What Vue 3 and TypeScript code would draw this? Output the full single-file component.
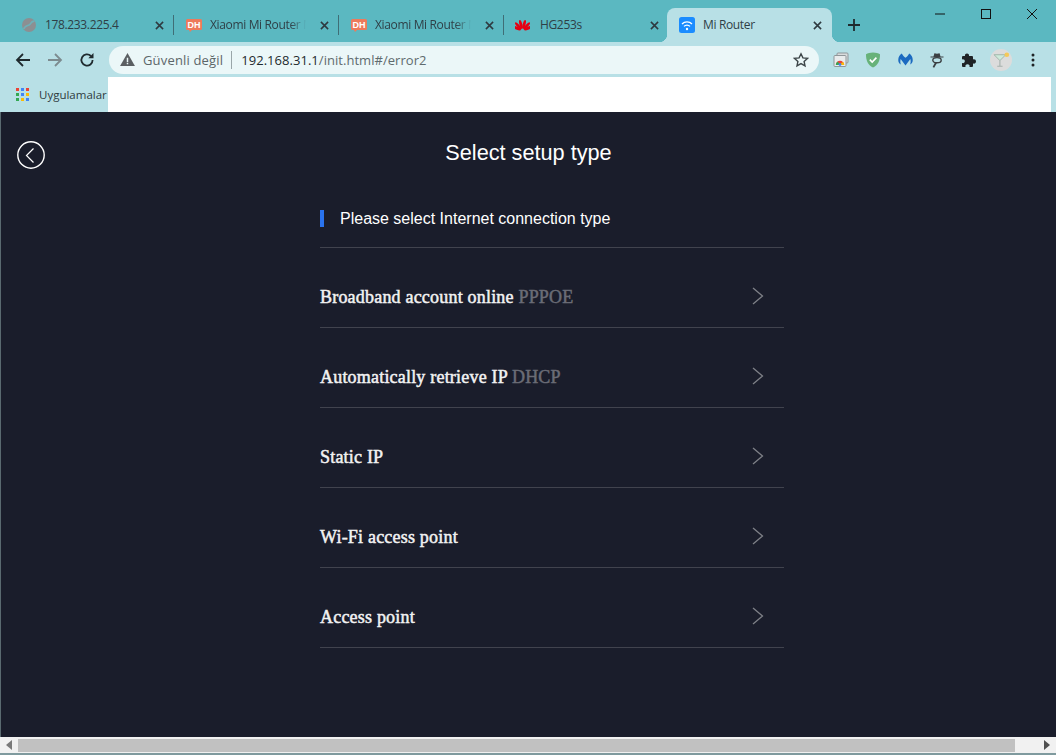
<script setup lang="ts">
type Tab = { title: string; icon: 'globe' | 'dh' | 'huawei' | 'wifi'; active?: boolean; faded?: boolean }
type Option = { label: string; tag?: string }

const tabs: Tab[] = [
  { title: '178.233.225.4', icon: 'globe' },
  { title: 'Xiaomi Mi Router M', icon: 'dh', faded: true },
  { title: 'Xiaomi Mi Router M', icon: 'dh', faded: true },
  { title: 'HG253s', icon: 'huawei' },
  { title: 'Mi Router', icon: 'wifi', active: true },
]

const options: Option[] = [
  { label: 'Broadband account online', tag: 'PPPOE' },
  { label: 'Automatically retrieve IP', tag: 'DHCP' },
  { label: 'Static IP' },
  { label: 'Wi-Fi access point' },
  { label: 'Access point' },
]

const appColors = ['#ea4335', '#4285f4', '#ea4335', '#34a853', '#4285f4', '#fbbc05', '#34a853', '#fbbc05', '#4285f4']
const petals = [-68, -42, -15, 15, 42, 68]
</script>

<template>
  <div class="window">
    <div class="tabstrip">
      <div v-for="(tab, i) in tabs" :key="i" class="tab" :class="{ active: tab.active, sep: i < 3 }">
        <svg v-if="tab.icon === 'globe'" class="favicon" viewBox="0 0 14 14">
          <circle cx="7" cy="7" r="7" fill="#8c8f92" />
          <path d="M12.500 3.200C8.500 3 9.500 6 7 7S2.500 8 1.800 11" fill="none" stroke="#6fb0b8" stroke-width="1.700" />
        </svg>
        <svg v-else-if="tab.icon === 'dh'" class="favicon-dh" viewBox="0 0 16 13">
          <path d="M1.500 0h13A1.500 1.500 0 0 1 16 1.500v8A1.500 1.500 0 0 1 14.500 11H6l-2 2-1-2H1.500A1.500 1.500 0 0 1 0 9.500v-8A1.500 1.500 0 0 1 1.500 0z" fill="#ee7a5b" />
          <text x="8" y="9" text-anchor="middle" class="dh-text">DH</text>
        </svg>
        <svg v-else-if="tab.icon === 'huawei'" class="favicon huawei" viewBox="0 0 15 12">
          <ellipse v-for="a in petals" :key="a" cx="7.500" cy="5.200" rx="1.400" ry="4.600" fill="#e60012" :transform="`rotate(${a} 7.500 11.500)`" />
        </svg>
        <svg v-else class="favicon wifi" viewBox="0 0 16 16">
          <rect width="16" height="16" rx="2.500" fill="#1a8cff" />
          <path d="M3 7a7 7 0 0 1 10 0M5 9.400a4 4 0 0 1 6 0" fill="none" stroke="#fff" stroke-width="1.300" />
          <circle cx="8" cy="12" r="1.200" fill="#fff" />
        </svg>
        <span class="tab-title" :class="{ faded: tab.faded }">{{ tab.title }}</span>
        <svg class="tab-close" viewBox="0 0 10 10">
          <path d="M1 1l8 8M9 1l-8 8" stroke="#2e3a40" stroke-width="1.700" fill="none" />
        </svg>
      </div>
      <svg class="new-tab" viewBox="0 0 14 14">
        <path d="M7 1v12M1 7h12" stroke="#1f2a2e" stroke-width="1.800" fill="none" />
      </svg>
      <div class="win-controls">
        <span class="win-btn"><svg viewBox="0 0 12 12"><path d="M1 6h10" stroke="#111" fill="none" /></svg></span>
        <span class="win-btn"><svg viewBox="0 0 12 12"><rect x="1.500" y="1.500" width="9" height="9" stroke="#111" fill="none" /></svg></span>
        <span class="win-btn"><svg viewBox="0 0 12 12"><path d="M1 1l10 10M11 1L1 11" stroke="#111" fill="none" /></svg></span>
      </div>
    </div>

    <div class="toolbar">
      <span class="tool">
        <svg viewBox="0 0 16 16"><path d="M15 8H2M8 2L2 8l6 6" fill="none" stroke="#1f2a2e" stroke-width="1.800" /></svg>
      </span>
      <span class="tool">
        <svg viewBox="0 0 16 16"><path d="M1 8h13M8 2l6 6-6 6" fill="none" stroke="#7c8b8f" stroke-width="1.800" /></svg>
      </span>
      <span class="tool">
        <svg viewBox="0 0 16 16">
          <path d="M13.600 8a5.600 5.600 0 1 1-1.700-4" fill="none" stroke="#1f2a2e" stroke-width="1.800" />
          <path d="M14.500 1v5.200H9.300z" fill="#1f2a2e" />
        </svg>
      </span>
      <div class="omnibox">
        <svg class="warn" viewBox="0 0 16 14">
          <path d="M8 0l8 14H0z" fill="#5a5f62" />
          <path d="M7.200 5h1.600v4.600H7.200zM7.200 10.600h1.600v1.600H7.200z" fill="#ebf7f8" />
        </svg>
        <span class="insecure">Güvenli değil</span>
        <span class="divider"></span>
        <span class="url"><b>192.168.31.1</b>/init.html#/error2</span>
        <svg class="star" viewBox="0 0 16 16">
          <path d="M8 1.800l1.900 4.100 4.500.5-3.300 3 .9 4.400L8 11.600l-4 2.200.9-4.400-3.300-3 4.500-.5z" fill="none" stroke="#3d4649" stroke-width="1.400" />
        </svg>
      </div>
      <div class="extensions">
        <span class="tool">
          <svg viewBox="0 0 16 16">
            <rect x="4" y="1" width="11" height="10" rx="1" fill="#d8dcdd" stroke="#8f9699" />
            <rect x="1" y="3.500" width="12" height="11" rx="1" fill="#e8ebec" stroke="#8f9699" />
            <path d="M2.800 13a4.200 4.200 0 0 1 8.400 0z" fill="#ea4335" />
            <path d="M2.800 13a4.200 4.200 0 0 1 2-3.500L7 13z" fill="#34a853" />
            <path d="M8 13h3.200a4.200 4.200 0 0 0-1.200-3l-2 1.300z" fill="#fbbc05" />
            <circle cx="7" cy="12.600" r="1.400" fill="#4285f4" />
          </svg>
        </span>
        <span class="tool">
          <svg viewBox="0 0 16 16">
            <path d="M8 .6c3 0 5.200.8 7 1.600 0 6-1.600 10.800-7 13.400C2.600 13 1 8.200 1 2.200 2.800 1.400 5 .6 8 .6z" fill="#67b279" />
            <path d="M4.800 7.600l2.400 2.400 4.200-4.400" fill="none" stroke="#fff" stroke-width="1.600" />
          </svg>
        </span>
        <span class="tool">
          <svg class="mb-logo" viewBox="0 0 16 14">
            <path d="M4 .5C2 1.500.2 4 .2 7.500c0 2.300 1 4 2.800 5-.7-2-.8-4-.2-6L8 13.500l5.200-7c.6 2 .5 4-.2 6 1.800-1 2.800-2.700 2.800-5C15.800 4 14 1.500 12 .5 11 2.500 9.500 4.200 8 5.200 6.500 4.200 5 2.500 4 .5z" fill="#1b6ac0" />
          </svg>
        </span>
        <span class="tool">
          <svg viewBox="0 0 16 16">
            <path d="M4.500 4.600L5.400 1.200l2.600.6 2.600-.6.900 3.400zM1.500 4.400h13v1.200h-13z" fill="#3a3f42" />
            <ellipse cx="8" cy="8.200" rx="4.200" ry="2.600" fill="none" stroke="#3a3f42" stroke-width="1.400" />
            <path d="M7 10.800l-2.600 4.600" stroke="#3a3f42" stroke-width="1.800" fill="none" />
          </svg>
        </span>
        <span class="tool">
          <svg viewBox="0 0 16 16">
            <path d="M6 1.500c1.500 0 2.300 1 2 2.500H11a1 1 0 0 1 1 1v2.500c1.800-.5 3 .5 3 2s-1.200 2.500-3 2V14a1 1 0 0 1-1 1H8.500c.5-1.800-.5-2.800-2-2.800s-2.500 1-2 2.800H2a1 1 0 0 1-1-1v-3c1.800.5 2.800-.5 2.800-1.800S2.800 7 1 7.500V5a1 1 0 0 1 1-1h2C3.700 2.500 4.500 1.500 6 1.500z" fill="#1f2326" />
          </svg>
        </span>
        <span class="tool">
          <span class="avatar">
            <svg viewBox="0 0 16 16">
              <path d="M1 3.500h11L6.500 9z" fill="#cdeadb" stroke="#8fa69a" stroke-width=".7" />
              <path d="M6.500 9v5M4 14.400h5" stroke="#a5b0ac" stroke-width="1" fill="none" />
              <circle cx="13" cy="3.500" r="2.200" fill="#f4c95a" />
            </svg>
          </span>
        </span>
        <span class="tool">
          <svg viewBox="0 0 16 16"><circle cx="8" cy="3" r="1.500" fill="#1f2326" /><circle cx="8" cy="8" r="1.500" fill="#1f2326" /><circle cx="8" cy="13" r="1.500" fill="#1f2326" /></svg>
        </span>
      </div>
    </div>

    <div class="bookmarks">
      <div class="apps">
        <i v-for="(c, i) in appColors" :key="i" :style="{ background: c }"></i>
      </div>
      <span class="apps-label">Uygulamalar</span>
      <div class="blank"></div>
    </div>

    <main class="page">
      <header class="page-head">
        <svg class="back" viewBox="0 0 28 28">
          <circle cx="14" cy="14" r="13.200" fill="none" stroke="#fff" stroke-width="1.400" />
          <path d="M16.500 7.500L9.500 14.500l7 7" fill="none" stroke="#fff" stroke-width="1.200" />
        </svg>
        <h1 class="title">Select setup type</h1>
      </header>

      <section class="panel">
        <div class="panel-head"><span class="panel-mark"></span>Please select Internet connection type</div>
        <div v-for="opt in options" :key="opt.label" class="option">
          <span class="option-text">{{ opt.label }} <em v-if="opt.tag">{{ opt.tag }}</em></span>
          <svg class="chev" viewBox="0 0 12 18"><path d="M1 1l9.500 8L1 17" fill="none" stroke="#7e8087" stroke-width="1.300" /></svg>
        </div>
      </section>
    </main>

    <div class="scrollbar">
      <span class="arrow left"></span>
      <div class="thumb"></div>
      <span class="arrow right"></span>
    </div>
    <div class="frame-bottom"></div>
  </div>
</template>

<style>
html, body { margin: 0; background: #5bb8c1; overflow: hidden; }
</style>

<style scoped>
.window {
  width: 1056px;
  height: 755px;
  display: flex;
  flex-direction: column;
  background: #b8e0e6;
  font-family: "Open Sans", "Noto Sans", sans-serif;
  overflow: hidden;
}

.tabstrip {
  height: 42px;
  flex: none;
  display: flex;
  align-items: flex-end;
  padding-left: 9px;
  background: #5bb8c1;
}
.tab {
  position: relative;
  width: 165px;
  height: 34px;
  flex: none;
  box-sizing: border-box;
  display: flex;
  align-items: center;
  padding: 0 9px 0 13px;
  color: #2f3f46;
  font-size: 12px;
  letter-spacing: -.35px;
}
.tab.sep::after {
  content: "";
  position: absolute;
  right: 0;
  top: 7px;
  height: 20px;
  width: 1px;
  background: #3f6e76;
}
.tab.active {
  margin-left: -2px;
  background: #b8e0e6;
  border-radius: 8px 8px 0 0;
}
.tab.active::before,
.tab.active::after {
  content: "";
  position: absolute;
  bottom: 0;
  width: 8px;
  height: 8px;
}
.tab.active::before {
  left: -8px;
  background: radial-gradient(circle at 0 0, transparent 8px, #b8e0e6 8.500px);
}
.tab.active::after {
  right: -8px;
  background: radial-gradient(circle at 100% 0, transparent 8px, #b8e0e6 8.500px);
}
.favicon {
  width: 14px;
  height: 14px;
  flex: none;
  margin-right: 9px;
}
.favicon.huawei {
  width: 15px;
  height: 12px;
  margin: 0 10px 0 -2px;
}
.favicon.wifi {
  width: 16px;
  height: 16px;
  margin: 0 8px 0 -1px;
}
.favicon-dh {
  width: 16px;
  height: 13px;
  flex: none;
  margin: 1px 8px 0 -1px;
}
.dh-text {
  fill: #fff;
  font: bold 9px "Liberation Sans", sans-serif;
  letter-spacing: 0;
}
.tab-title {
  flex: 1;
  min-width: 0;
  white-space: nowrap;
  overflow: hidden;
  line-height: 16px;
}
.tab-title.faded {
  -webkit-mask-image: linear-gradient(90deg, #000 82%, transparent 98%);
  mask-image: linear-gradient(90deg, #000 82%, transparent 98%);
}
.tab-close {
  width: 9px;
  height: 9px;
  flex: none;
  margin: 0 1px 0 12px;
}
.new-tab {
  width: 14px;
  height: 14px;
  flex: none;
  margin: 0 0 10px 15px;
}
.win-controls {
  margin-left: auto;
  align-self: flex-start;
  display: flex;
  padding-right: 1px;
}
.win-btn {
  width: 46px;
  height: 28px;
  display: flex;
  align-items: center;
  justify-content: center;
}
.win-btn svg {
  width: 12px;
  height: 12px;
}

.toolbar {
  height: 35px;
  flex: none;
  display: flex;
  align-items: center;
  padding: 0 7px;
}
.tool {
  width: 32px;
  height: 32px;
  flex: none;
  display: flex;
  align-items: center;
  justify-content: center;
}
.tool > svg {
  width: 16px;
  height: 16px;
}
.tool > svg.mb-logo {
  width: 15px;
  height: 13px;
}
.omnibox {
  width: 710px;
  height: 28px;
  margin-left: 6px;
  flex: none;
  box-sizing: border-box;
  display: flex;
  align-items: center;
  padding: 0 10px 0 11px;
  background: #ebf7f8;
  border-radius: 14px;
  font-size: 13px;
}
.warn {
  width: 15px;
  height: 13px;
  flex: none;
}
.insecure {
  margin-left: 8px;
  color: #5c6669;
  letter-spacing: .17px;
}
.divider {
  width: 1px;
  height: 18px;
  margin: 0 9px 0 8px;
  background: #9aa6a9;
}
.url {
  color: #5f6b6e;
  letter-spacing: .04px;
}
.url b {
  font-weight: 400;
  color: #1e2a2e;
}
.star {
  width: 16px;
  height: 16px;
  margin-left: auto;
}
.extensions {
  margin-left: 6px;
  display: flex;
}
.avatar {
  width: 22px;
  height: 22px;
  border-radius: 50%;
  background: #dcdcdc;
  display: flex;
  align-items: center;
  justify-content: center;
}
.avatar svg {
  width: 17px;
  height: 17px;
}

.bookmarks {
  height: 35px;
  flex: none;
  display: flex;
  align-items: center;
  padding: 0 5px 0 16px;
  box-sizing: border-box;
}
.apps {
  display: grid;
  grid-template-columns: repeat(3, 3px);
  gap: 2px;
  flex: none;
}
.apps i {
  width: 3px;
  height: 3px;
  display: block;
}
.apps-label {
  margin-left: 10px;
  width: 69px;
  flex: none;
  font-size: 11.500px;
  color: #2f3b40;
  white-space: nowrap;
}
.blank {
  flex: 1;
  align-self: stretch;
  background: #fff;
}

.page {
  height: 625px;
  flex: none;
  box-sizing: border-box;
  background: #1a1d2b;
  border-left: 1px solid #5a6a70;
  color: #fff;
  font-family: "Liberation Sans", Arial, sans-serif;
}
.page-head {
  display: grid;
  grid-template-columns: 1fr auto 1fr;
  align-items: center;
  padding: 29px 16px 0;
}
.back {
  width: 28px;
  height: 28px;
}
.title {
  margin: 0;
  font-size: 21.700px;
  font-weight: 400;
  line-height: 24px;
  position: relative;
  top: -2px;
}
.panel {
  width: 464px;
  margin: 22px 0 0 319px;
}
.panel-head {
  height: 57px;
  box-sizing: border-box;
  display: flex;
  align-items: center;
  border-bottom: 1px solid #41434e;
  padding-bottom: 1px;
  font-size: 16px;
}
.panel-mark {
  width: 4px;
  height: 17px;
  margin-right: 16px;
  background: #2a73ee;
}
.option {
  height: 80px;
  box-sizing: border-box;
  display: flex;
  align-items: center;
  justify-content: space-between;
  padding: 20px 20px 0 0;
  border-bottom: 1px solid #41434e;
}
.option-text {
  font-family: "Liberation Serif", "Times New Roman", serif;
  font-size: 18px;
  letter-spacing: .2px;
  -webkit-text-stroke: .5px currentColor;
  color: #f2f2f2;
}
.option-text em {
  font-style: normal;
  color: #6a6c76;
}
.chev {
  width: 12px;
  height: 18px;
  margin-top: -4px;
}

.scrollbar {
  height: 16px;
  flex: none;
  display: flex;
  align-items: center;
  background: #f1f1f1;
}
.arrow {
  width: 0;
  height: 0;
  flex: none;
  border-top: 5px solid transparent;
  border-bottom: 5px solid transparent;
}
.arrow.left {
  margin: 0 6px 0 6px;
  border-right: 6px solid #7a7a7a;
}
.thumb {
  width: 997px;
  height: 13px;
  background: #c1c1c1;
}
.arrow.right {
  margin-left: 29px;
  border-left: 6px solid #505050;
}
.frame-bottom {
  flex: 1;
  background: #7f9a9e;
}
</style>
